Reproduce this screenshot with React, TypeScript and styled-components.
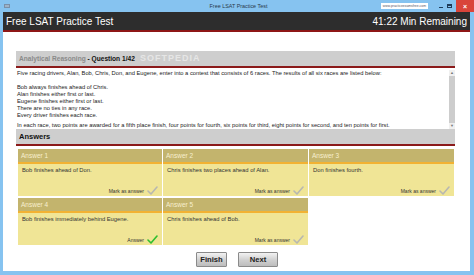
import React from "react";
import styled, { createGlobalStyle } from "styled-components";

const Global = createGlobalStyle`
  html, body { margin: 0; padding: 0; background: #86c3f0; }
  body { font-family: "Liberation Sans", Arial, sans-serif; }
  * { box-sizing: border-box; }
`;

const Window = styled.div`
  width: 474px;
  height: 275px;
  background: #86c3f0;
  padding: 0 4px 4px 3px;
  display: flex;
  flex-direction: column;
  overflow: hidden;
`;

const TitleBar = styled.div`
  height: 12px;
  display: grid;
  grid-template-columns: 1fr auto 1fr;
  align-items: center;
  margin-right: -4px;
`;

const AppIcon = styled.div`
  width: 6px;
  height: 4px;
  background: #9fb3c8;
  border: 1px solid #7a90a8;
  margin-left: 1px;
`;

const TitleText = styled.div`
  font-size: 5.4px;
  color: #2a3a4a;
  white-space: nowrap;
`;

const Controls = styled.div`
  justify-self: end;
  display: flex;
  align-items: center;
  height: 12px;
`;

const Watermark = styled.div`
  background: #fff;
  font-size: 3.4px;
  color: #556;
  padding: 1px 2px;
  margin-right: 9px;
  white-space: nowrap;
`;

const CtlBtn = styled.div`
  width: 8px;
  height: 12px;
  display: flex;
  align-items: center;
  justify-content: center;
`;

const MinGlyph = styled.div`
  width: 4px;
  height: 1px;
  background: #1e3c5a;
  margin-top: 3px;
`;

const MaxGlyph = styled.div`
  width: 5px;
  height: 4px;
  border: 1px solid #1e3c5a;
  border-top-width: 2px;
`;

const CloseBtn = styled.div`
  width: 18px;
  height: 12px;
  margin-left: 3px;
  background: #d9443a;
  color: #fff;
  font-size: 7px;
  font-weight: bold;
  display: flex;
  align-items: center;
  justify-content: center;
`;

const Client = styled.div`
  flex: 1;
  background: #fff;
  display: flex;
  flex-direction: column;
`;

const Header = styled.div`
  height: 20px;
  background: #2d2d2d;
  border-bottom: 2px solid #8e1717;
  color: #fff;
  font-size: 10px;
  display: flex;
  align-items: center;
  justify-content: space-between;
  padding: 0 3px;
  flex: none;
`;

const Main = styled.div`
  padding: 19px 15px 0 13px;
  display: flex;
  flex-direction: column;
`;

const SectionHeader = styled.div<{ $size?: number }>`
  position: relative;
  height: 17px;
  background: #cecece;
  border-bottom: 2px solid #8b1a1a;
  display: flex;
  align-items: center;
  padding-left: 3px;
  font-weight: bold;
  font-size: ${(p) => p.$size ?? 6.6}px;
  color: #111;
`;

const Muted = styled.span`
  color: #8a8a8a;
`;

const Softpedia = styled.span`
  position: absolute;
  left: 124px;
  top: 2px;
  font-size: 9px;
  letter-spacing: 1px;
  color: rgba(255, 255, 255, 0.5);
  font-weight: bold;
`;

const QuestionArea = styled.div`
  height: 61px;
  display: flex;
  gap: 3px;
  padding-top: 2px;
`;

const QuestionText = styled.div`
  flex: 1;
  font-size: 5.75px;
  line-height: 7px;
  color: #222;
  padding-left: 1px;
`;

const Para = styled.p<{ $mt?: number }>`
  margin: ${(p) => p.$mt ?? 0}px 0 0 0;
`;

const ScrollBar = styled.div`
  width: 6px;
  display: flex;
  flex-direction: column;
  background: #f0f0f0;
`;

const ScrollArrow = styled.div`
  height: 6px;
  font-size: 4px;
  line-height: 6px;
  text-align: center;
  color: #777;
`;

const ScrollThumb = styled.div`
  flex: 1;
  background: #cdcdcd;
`;

const Grid = styled.div`
  display: grid;
  grid-template-columns: 144px 145px 145px;
  column-gap: 1px;
  row-gap: 2px;
  padding: 3px 0 0 2px;
`;

const Card = styled.div`
  display: flex;
  flex-direction: column;
`;

const CardHead = styled.div`
  height: 15px;
  background: #c3b46d;
  border-bottom: 2px solid #f2b233;
  color: #f7efcf;
  font-size: 6.5px;
  display: flex;
  align-items: center;
  padding-left: 3px;
`;

const CardBody = styled.div`
  height: 32px;
  background: #f0e596;
  display: flex;
  flex-direction: column;
  justify-content: space-between;
  padding: 3px 4px 1px 4px;
  font-size: 5.8px;
  color: #333;
`;

const CardFoot = styled.div`
  display: flex;
  align-items: center;
  justify-content: flex-end;
  gap: 3px;
  font-size: 5px;
  color: #333;
`;

const Buttons = styled.div`
  display: flex;
  justify-content: center;
  gap: 11px;
  margin-top: 7px;
  padding-left: 3px;
`;

const Button = styled.button<{ $w: number }>`
  width: ${(p) => p.$w}px;
  height: 15px;
  padding: 0;
  border: 1px solid #8a8a8a;
  border-radius: 1px;
  background: linear-gradient(#f2f2f2, #cfcfcf 55%, #bdbdbd);
  font-family: "Liberation Sans", Arial, sans-serif;
  font-weight: bold;
  font-size: 7.6px;
  color: #222;
`;

const Check = ({ color }: { color: string }) => (
  <svg width="11" height="9" viewBox="0 0 11 9">
    <polyline points="1,5 4,8 10,1" fill="none" stroke={color} strokeWidth="1.6" strokeLinecap="round" strokeLinejoin="round" />
  </svg>
);

type Ans = { label: string; text: string; chosen?: boolean };

const answers: Ans[] = [
  { label: "Answer 1", text: "Bob finishes ahead of Don." },
  { label: "Answer 2", text: "Chris finishes two places ahead of Alan." },
  { label: "Answer 3", text: "Don finishes fourth." },
  { label: "Answer 4", text: "Bob finishes immediately behind Eugene.", chosen: true },
  { label: "Answer 5", text: "Chris finishes ahead of Bob." },
];

export default function App() {
  return (
    <>
      <Global />
      <Window>
        <TitleBar>
          <AppIcon />
          <TitleText>Free LSAT Practice Test</TitleText>
          <Controls>
            <Watermark>www.practiceexamsfree.com</Watermark>
            <CtlBtn><MinGlyph /></CtlBtn>
            <CtlBtn><MaxGlyph /></CtlBtn>
            <CloseBtn>×</CloseBtn>
          </Controls>
        </TitleBar>
        <Client>
          <Header>
            <span>Free LSAT Practice Test</span>
            <span>41:22 Min Remaining</span>
          </Header>
          <Main>
            <SectionHeader>
              <Muted>Analytical Reasoning</Muted>&nbsp;- Question 1/42
              <Softpedia>SOFTPEDIA</Softpedia>
            </SectionHeader>
            <QuestionArea>
              <QuestionText>
                <Para>
                  Five racing drivers, Alan, Bob, Chris, Don, and Eugene, enter into a contest that consists of 6 races. The results of all six races are listed below:
                </Para>
                <Para $mt={7}>
                  Bob always finishes ahead of Chris.<br />
                  Alan finishes either first or last.<br />
                  Eugene finishes either first or last.<br />
                  There are no ties in any race.<br />
                  Every driver finishes each race.
                </Para>
                <Para $mt={3}>
                  In each race, two points are awarded for a fifth place finish, four points for fourth, six points for third, eight points for second, and ten points for first.
                </Para>
              </QuestionText>
              <ScrollBar>
                <ScrollArrow>▲</ScrollArrow>
                <ScrollThumb />
                <ScrollArrow>▼</ScrollArrow>
              </ScrollBar>
            </QuestionArea>
            <SectionHeader $size={7.5}>Answers</SectionHeader>
            <Grid>
              {answers.map((a) => (
                <Card key={a.label}>
                  <CardHead>{a.label}</CardHead>
                  <CardBody>
                    <span>{a.text}</span>
                    <CardFoot>
                      <span>{a.chosen ? "Answer" : "Mark as answer"}</span>
                      <Check color={a.chosen ? "#2fbf2f" : "#b8b8b0"} />
                    </CardFoot>
                  </CardBody>
                </Card>
              ))}
            </Grid>
            <Buttons>
              <Button $w={31}>Finish</Button>
              <Button $w={40}>Next</Button>
            </Buttons>
          </Main>
        </Client>
      </Window>
    </>
  );
}
